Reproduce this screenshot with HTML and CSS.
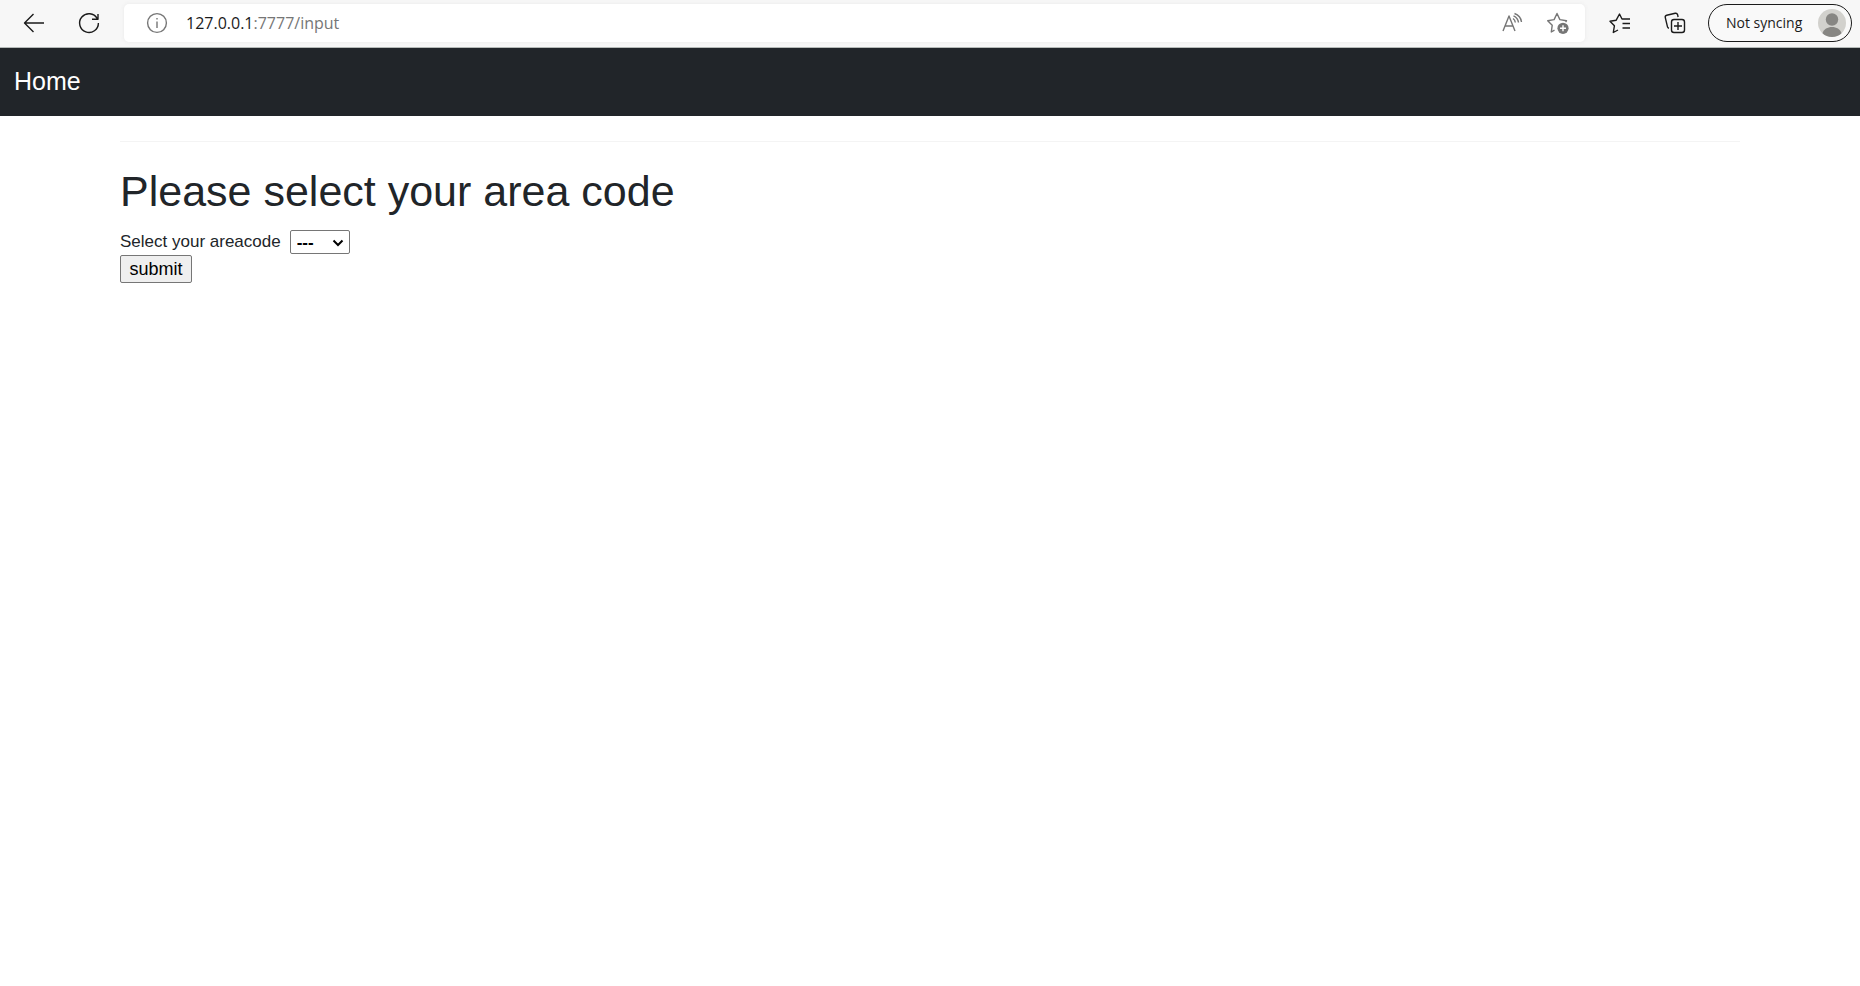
FILE: index.html
```html
<!DOCTYPE html>
<html lang="en">
<head>
<meta charset="utf-8">
<title>Area code</title>
<link rel="stylesheet" href="styles.css">
</head>
<body>
<header class="toolbar">
  <button class="tool" type="button" aria-label="Back">
    <svg class="icon" viewBox="0 0 24 24"><path d="M22 12H2.500M11.500 3L2.500 12l9 9"/></svg>
  </button>
  <button class="tool" type="button" aria-label="Refresh">
    <svg class="icon" viewBox="0 0 24 24"><path d="M20.200 7.500A9.400 9.400 0 1 0 21.400 12M21 3v5.300h-6"/></svg>
  </button>
  <div class="address">
    <button class="tool muted" type="button" aria-label="Site information">
      <svg class="icon" viewBox="0 0 24 24"><circle cx="12" cy="12" r="9.400"/><path d="M12 10.500v6.500M12 7v1.600"/></svg>
    </button>
    <div class="url"><span class="host">127.0.0.1</span>:7777/input</div>
    <div class="address-actions">
      <button class="tool muted" type="button" aria-label="Read aloud">
        <svg class="icon" viewBox="0 0 24 24"><path d="M3 20L9 5l6 15M5 15h8M13 7.500c1.500 1 2.200 2.300 2.300 4M13.500 4.800c3 1.400 4.700 3.700 5 6.700M14.500 2.500c4.300 1.500 6.500 4.500 7 8.500"/></svg>
      </button>
      <button class="tool muted" type="button" aria-label="Add to favorites">
        <svg class="icon" viewBox="0 0 24 24"><path d="M8.500 19.200L5.300 21 6.200 14.300 1.700 9.800l6.400-1.200L11 2.500l2.900 6.100 6.600 1.100-1 1.300"/><circle class="solid" cx="17" cy="17.300" r="5.600"/><path class="plus" d="M17 14.300v6M14 17.300h6"/></svg>
      </button>
    </div>
  </div>
  <div class="tools">
    <button class="tool" type="button" aria-label="Favorites">
      <svg class="icon" viewBox="0 0 24 24"><path d="M10 19l-4.700 2.500 1.100-6.700L2 10.200l6.200-1L11.500 3l2.500 5h8M14.500 12.500H22M14.500 17H22"/></svg>
    </button>
    <button class="tool" type="button" aria-label="Collections">
      <svg class="icon" viewBox="0 0 24 24"><path d="M6 17.200c-.9-.1-1.300-.6-1.500-1.400L2.300 6.700c-.3-1.200.3-2.100 1.400-2.400l8.500-2c1.300-.3 2 .2 2.400 1.400l.5 2.300"/><rect x="8.500" y="8.500" width="13" height="13" rx="2.500"/><path d="M15 11v8M11 15h8"/></svg>
    </button>
    <button class="profile" type="button">
      <span>Not syncing</span>
      <svg class="avatar" viewBox="0 0 28 28"><circle cx="14" cy="14" r="14" fill="#d2d1cd"/><circle cx="14" cy="10.500" r="6.200" fill="#878683"/><path d="M4.500 24.200c1.300-4 5-6.200 9.500-6.200s8.200 2.200 9.500 6.200A14 14 0 0 1 14 28a14 14 0 0 1-9.500-3.800z" fill="#878683"/></svg>
    </button>
  </div>
</header>
<nav class="navbar"><a class="brand" href="#">Home</a></nav>
<main class="container">
  <hr class="rule">
  <h1 class="title">Please select your area code</h1>
  <form class="form">
    <div class="field">
      <label for="areacode">Select your areacode</label>
      <div class="select-box">
        <select class="select" id="areacode"><option>---</option></select>
        <svg class="chevron" viewBox="0 0 12 8"><path d="M1.500 1.500L6 6l4.500-4.500"/></svg>
      </div>
    </div>
    <button class="submit" type="submit">submit</button>
  </form>
</main>
</body>
</html>
```
FILE: styles.css
```css
* { box-sizing: border-box; }
body {
  margin: 0;
  background: #fff;
  color: #212529;
  font-family: "Liberation Sans", Arial, sans-serif;
  font-size: 17px;
}
.toolbar {
  display: flex;
  align-items: center;
  height: 48px;
  padding: 0 8px 2px 22px;
  background: #f7f7f7;
  border-bottom: 1px solid #b5bab8;
  font-family: "Open Sans", "Segoe UI", sans-serif;
}
.tool {
  display: flex;
  padding: 0;
  border: 0;
  background: none;
  color: #1b1b1b;
}
.toolbar > .tool { margin-right: 31px; }
.toolbar > .tool + .tool { margin-right: 23px; }
.tool.muted { color: #767676; }
.icon {
  width: 24px;
  height: 24px;
  fill: none;
  stroke: currentColor;
  stroke-width: 1.4;
  stroke-linejoin: round;
}
.icon .solid { fill: currentColor; stroke: none; }
.icon .plus { stroke: #fff; }
.address {
  display: flex;
  flex: 1;
  align-items: center;
  height: 38px;
  padding: 0 15px 0 21px;
  border-radius: 5px;
  background: #fff;
  box-shadow: 0 0 4px #e9e9e9;
}
.url {
  flex: 1;
  margin-left: 17px;
  color: #767676;
  font-size: 16px;
}
.host { color: #1b1b1b; }
.address-actions { display: flex; gap: 22px; }
.tools {
  display: flex;
  align-items: center;
  gap: 31px;
  margin-left: 23px;
}
.profile {
  display: flex;
  align-items: center;
  justify-content: space-between;
  width: 144px;
  height: 38px;
  margin-left: -10px;
  padding: 0 5px 0 17px;
  border: 1px solid #1b1b1b;
  border-radius: 19px;
  background: #f9f9f9;
  color: #1b1b1b;
  font-family: inherit;
  font-size: 14px;
}
.avatar { width: 28px; height: 28px; }
.navbar {
  display: flex;
  align-items: center;
  height: 68px;
  padding: 0 14px 2px;
  background: #212529;
}
.brand {
  color: #fff;
  font-size: 25px;
  text-decoration: none;
}
.container { margin: 0 120px; }
.rule {
  height: 1px;
  margin: 25px 0 23px;
  border: 0;
  background: #f4f4f4;
}
.title {
  margin: 0 0 13px;
  font-size: 43px;
  font-weight: 400;
  line-height: 52px;
}
.field {
  display: flex;
  align-items: center;
  gap: 9px;
  margin-bottom: 1px;
}
.select-box { position: relative; width: 60px; height: 24px; }
.select {
  display: block;
  width: 100%;
  height: 100%;
  padding: 0 20px 0 6px;
  appearance: none;
  border: 1px solid #767676;
  border-radius: 2px;
  background: #fff;
  color: #000;
  font-family: inherit;
  font-size: 17px;
  font-weight: 700;
}
.chevron {
  position: absolute;
  top: 9px;
  right: 6px;
  width: 12px;
  height: 8px;
  fill: none;
  stroke: #000;
  stroke-width: 2;
  pointer-events: none;
}
.submit {
  width: 72px;
  height: 28px;
  padding: 0;
  border: 1px solid #767676;
  border-radius: 2px;
  background: #efefef;
  color: #000;
  font-family: inherit;
  font-size: 18px;
}
```
